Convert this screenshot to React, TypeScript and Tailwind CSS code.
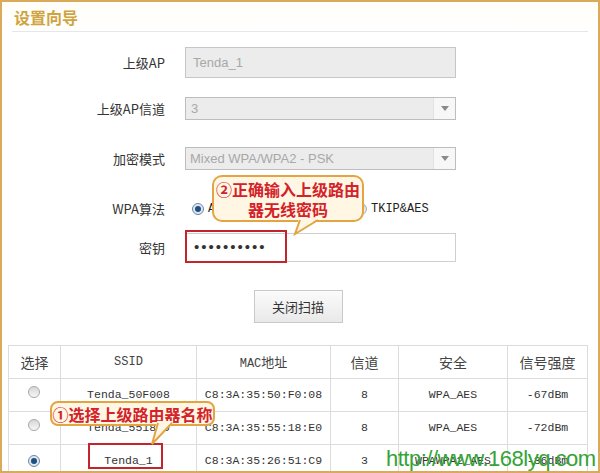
import React from "react";

const cjk = "font-['Noto_Sans_CJK_SC',sans-serif]";
const mono = "font-['Liberation_Mono','Noto_Sans_CJK_SC',monospace]";
const sans = "font-['Liberation_Sans',sans-serif]";

const Radio: React.FC<{ checked?: boolean }> = ({ checked }) => (
  <span
    className={
      "inline-flex items-center justify-center w-[12px] h-[12px] rounded-full border " +
      (checked
        ? "border-[#6d87a3] bg-[#dfe8f1]"
        : "border-[#a9a9a9] bg-gradient-to-b from-[#d6d6d6] to-[#f7f7f7]")
    }
  >
    {checked && <span className="w-[6px] h-[6px] rounded-full bg-[#1f4f80]" />}
  </span>
);

const Arrow = () => (
  <span className="flex items-center justify-center w-[22px] h-full bg-[#f7f7f7] border-l border-[#e2e2e2]">
    <span className="w-0 h-0 border-l-[4px] border-r-[4px] border-t-[5px] border-l-transparent border-r-transparent border-t-[#8a8a8a]" />
  </span>
);

const rows = [
  { ssid: "Tenda_50F008", mac: "C8:3A:35:50:F0:08", ch: "8", sec: "WPA_AES", sig: "-67dBm" },
  { ssid: "Tenda_5518E0", mac: "C8:3A:35:55:18:E0", ch: "8", sec: "WPA_AES", sig: "-72dBm" },
  { ssid: "Tenda_1", mac: "C8:3A:35:26:51:C9", ch: "3", sec: "WPAWPA2_AES", sig: "-36dBm", checked: true },
];

export default function App() {
  return (
    <div className="relative w-[600px] h-[473px] overflow-hidden bg-white border-2 border-[#d9aa5c]">
      {/* 상단 타이틀 */}
      <div className="h-[29px] flex items-center pl-[12px] bg-gradient-to-b from-[#fffdf7] to-white">
        <span className={`${cjk} text-[16px] leading-none font-bold text-[#cfa43f]`}>设置向导</span>
      </div>
      <div className="mx-[10px] h-px bg-[#e6e6e6]" />

      {/* 폼 영역 */}
      <div className={`${cjk} text-[13px] text-[#333]`}>
        <div className="mt-[15px] flex items-center h-[31px]">
          <span className="w-[163px] text-right">上级AP</span>
          <div className={`${sans} ml-[20px] w-[271px] h-full flex items-center pl-[7px] bg-[#ececec] border border-[#c6c6c6] text-[#a8a8a8] text-[13px]`}>
            Tenda_1
          </div>
        </div>

        <div className="mt-[19px] flex items-center h-[23px]">
          <span className="w-[163px] text-right">上级AP信道</span>
          <div className={`${sans} ml-[20px] w-[271px] h-full flex items-center bg-[#ececec] border border-[#bdbdbd] text-[#a8a8a8] text-[13px]`}>
            <span className="flex-1 pl-[5px]">3</span>
            <Arrow />
          </div>
        </div>

        <div className="mt-[27px] flex items-center h-[23px]">
          <span className="w-[163px] text-right">加密模式</span>
          <div className={`${sans} ml-[20px] w-[271px] h-full flex items-center bg-[#ececec] border border-[#bdbdbd] text-[#a8a8a8] text-[13px]`}>
            <span className="flex-1 pl-[4px]">Mixed WPA/WPA2 - PSK</span>
            <Arrow />
          </div>
        </div>

        <div className="mt-[27px] flex items-center h-[23px]">
          <span className="w-[163px] text-right">WPA算法</span>
          <div className={`${mono} ml-[27px] flex items-center text-[12px] text-[#222]`}>
            <Radio checked />
            <span className="ml-[4px] w-[147px]">AES</span>
            <Radio />
            <span className="ml-[4px]">TKIP&amp;AES</span>
          </div>
        </div>

        <div className="mt-[13px] flex items-center h-[29px]">
          <span className="w-[163px] text-right">密钥</span>
          <div className={`${sans} ml-[20px] w-[271px] h-full flex items-center pl-[8px] bg-white border border-[#cfcfcf] text-[#333] text-[15px] tracking-[2px]`}>
            ••••••••••
          </div>
        </div>

        <div className="mt-[28px] flex justify-center pr-[4px]">
          <button className="w-[89px] h-[33px] bg-gradient-to-b from-[#fbfbfb] to-[#e9e9e9] border border-[#c9c9c9] text-[13px] text-[#333]">
            关闭扫描
          </button>
        </div>

        {/* 스캔 결과 테이블 */}
        <table className="mt-[22px] ml-[6px] w-[579px] border-collapse table-fixed text-center">
          <colgroup>
            <col className="w-[52px]" />
            <col className="w-[136px]" />
            <col className="w-[134px]" />
            <col className="w-[68px]" />
            <col className="w-[109px]" />
            <col className="w-[80px]" />
          </colgroup>
          <thead>
            <tr className="h-[33px] text-[14px] text-[#444]">
              <th className="font-normal border border-[#dcdcdc]">选择</th>
              <th className={`${mono} font-normal text-[12px] border border-[#dcdcdc]`}>SSID</th>
              <th className={`${mono} font-normal text-[12px] border border-[#dcdcdc]`}>
                MAC<span className={cjk + " text-[13px]"}>地址</span>
              </th>
              <th className="font-normal border border-[#dcdcdc]">信道</th>
              <th className="font-normal border border-[#dcdcdc]">安全</th>
              <th className="font-normal border border-[#dcdcdc]">信号强度</th>
            </tr>
          </thead>
          <tbody className={`${mono} text-[11.5px] text-[#333]`}>
            {rows.map((r) => (
              <tr key={r.ssid} className="h-[33px]">
                <td className="border border-[#dcdcdc]">
                  <span className="inline-flex pr-[2px]">
                    <Radio checked={r.checked} />
                  </span>
                </td>
                <td className="border border-[#dcdcdc]">{r.ssid}</td>
                <td className="border border-[#dcdcdc]">{r.mac}</td>
                <td className="border border-[#dcdcdc]">{r.ch}</td>
                <td className="border border-[#dcdcdc]">{r.sec}</td>
                <td className="border border-[#dcdcdc]">{r.sig}</td>
              </tr>
            ))}
          </tbody>
        </table>
      </div>

      {/* 빨간 강조 박스 */}
      <div className="absolute left-[183px] top-[228px] w-[102px] h-[33px] border-2 border-[#c2262c]" />
      <div className="absolute left-[86px] top-[441px] w-[75px] h-[26px] border-2 border-[#c2262c]" />

      {/* 말풍선 */}
      <div className={`${cjk} absolute left-[210px] top-[173px] w-[152px] h-[47px] flex flex-col items-center justify-center rounded-[10px] border-2 border-[#e3a444] bg-[#fff7e4] text-[16px] leading-[20px] font-bold text-[#d3222a]`}>
        <span>②正确输入上级路由</span>
        <span>器无线密码</span>
      </div>
      <div className={`${cjk} absolute left-[48px] top-[399px] w-[165px] h-[25px] flex items-center justify-center rounded-[8px] border-2 border-[#e3a444] bg-[#fff7e4] text-[16px] leading-none font-bold text-[#d3222a]`}>
        ①选择上级路由器名称
      </div>
      <svg className="absolute left-0 top-0" width="596" height="469" viewBox="0 0 596 469">
        <polygon points="297,216 293,232 317,216" fill="#fff7e4" />
        <polyline points="298,218 293,232 316,218" fill="none" stroke="#e3a444" strokeWidth="2" />
        <polygon points="155,419 150,442 171,419" fill="#fff7e4" />
        <polyline points="156,421 150,442 170,421" fill="none" stroke="#e3a444" strokeWidth="2" />
      </svg>

      {/* 워터마크 */}
      <div className={`${sans} absolute left-[384px] top-[446px] text-[22px] leading-none tracking-[-0.5px] text-[#35a336]`}>
        http://www.168lyq.com
      </div>
    </div>
  );
}
